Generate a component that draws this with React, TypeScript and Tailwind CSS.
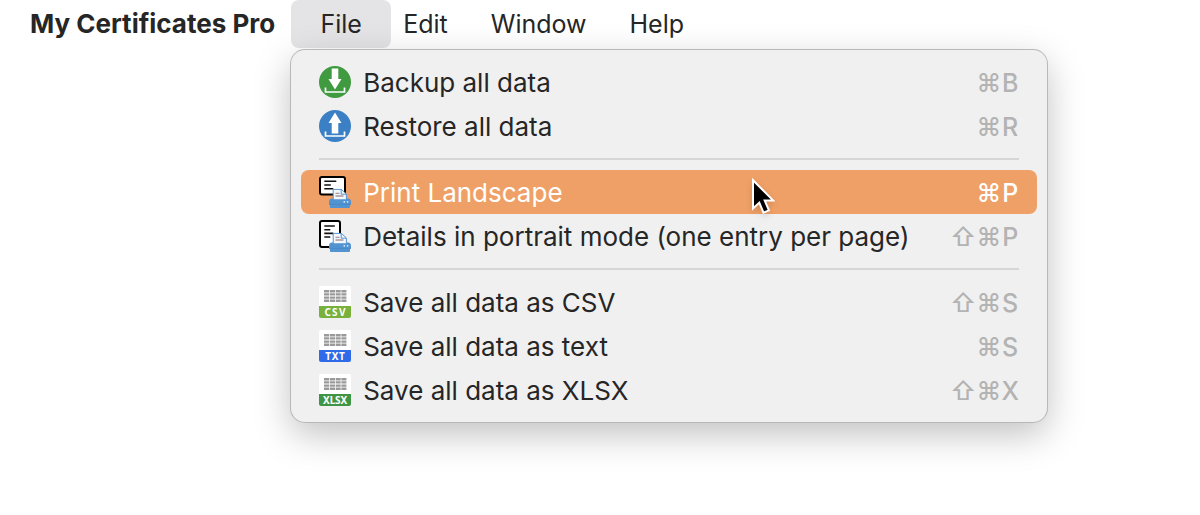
import React, { useState } from "react";

const BackupIcon = () => (
  <svg viewBox="0 0 32 32" className="size-8 shrink-0" aria-hidden="true">
    <circle cx="16" cy="16" r="16" fill="#409a40" />
    <path d="M12.7 2.5h6.6v10.5h3.2L16 23.5 9.5 13h3.2z" fill="#fff" />
    <path d="M6.5 21.5v4.5h19v-4.5" fill="none" stroke="#fff" strokeWidth="1.7" />
  </svg>
);

const RestoreIcon = () => (
  <svg viewBox="0 0 32 32" className="size-8 shrink-0" aria-hidden="true">
    <circle cx="16" cy="16" r="16" fill="#3b7fc4" />
    <path d="M16 2.5l6.5 10.5h-3.2v10.5h-6.6V13H9.5z" fill="#fff" />
    <path d="M6.5 21.5v4.5h19v-4.5" fill="none" stroke="#fff" strokeWidth="1.7" />
  </svg>
);

const Printer = () => (
  <g>
    <path d="M14.2 24V13.4h8.2l5 4.6v6z" fill="#f4f7fc" stroke="#5596d3" strokeWidth="1" />
    <path d="M22.2 13.4v4.8h5" fill="none" stroke="#5596d3" strokeWidth="1" />
    <path d="M16.5 17.3h4M16.5 20h8" stroke="#a9989c" strokeWidth="1.3" />
    <path d="M13 22.6h1.4v.8h13v-.8H29c2 0 3 1.3 3 3.2v2.8l-1 .4v2.2c0 .6-.3.8-.8.8H11.8c-.5 0-.8-.2-.8-.8V29l-1-.4v-2.8c0-1.9 1-3.2 3-3.2z" fill="#5294d2" />
    <path d="M10 28.4h22" stroke="#4583bf" strokeWidth="0.6" />
    <circle cx="25.3" cy="25.8" r="0.9" fill="#d9ecfb" />
    <circle cx="28.6" cy="25.8" r="0.9" fill="#d9ecfb" />
  </g>
);

const LandscapeIcon = () => (
  <svg viewBox="0 0 32 32" className="size-8 shrink-0" aria-hidden="true">
    <rect x="1" y="1" width="25" height="17.4" rx="2" fill="#fff" stroke="#000" strokeWidth="2" />
    <path d="M5.3 5.2h12M5.3 9h6.5M5.3 12.8h9" stroke="#111" strokeWidth="1.6" />
    <Printer />
  </svg>
);

const PortraitIcon = () => (
  <svg viewBox="0 0 32 32" className="size-8 shrink-0" aria-hidden="true">
    <rect x="1" y="1" width="20" height="26" rx="2" fill="#fff" stroke="#000" strokeWidth="2" />
    <path d="M5.3 6h10.5M5.3 9.8h6M5.3 13.4h9M5.3 17h6" stroke="#111" strokeWidth="1.6" />
    <Printer />
  </svg>
);

const FileIcon = ({ label, color, spread }: { label: string; color: string; spread: number[] }) => (
  <svg viewBox="0 0 32 32" className="size-8 shrink-0" aria-hidden="true">
    <rect width="32" height="32" rx="2" fill="#fff" />
    <path d="M0 20h32v10a2 2 0 0 1-2 2H2a2 2 0 0 1-2-2z" fill={color} />
    {[4, 7.2, 10.4, 13.6].map((y) => (
      <path key={y} d={`M5 ${y + 1.2}h5.3M11 ${y + 1.2}h5M16.7 ${y + 1.2}h5M22.4 ${y + 1.2}h5`} stroke="#9a9a9a" strokeWidth="2.4" />
    ))}
    <text
      x={spread.join(" ")}
      y="29.5"
      textAnchor="middle"
      fill="#fff"
      fontFamily="'Noto Sans', sans-serif"
      fontWeight="700"
      fontSize="10"
    >
      {label}
    </text>
  </svg>
);

const Pointer = () => (
  <svg viewBox="0 0 24 38" className="pointer-events-none absolute left-[460px] top-[127px] z-10 h-[38px] w-6 drop-shadow-md" aria-hidden="true">
    <path d="M2 3.2v28.2l6.3-5.8 4.2 10 5.4-2.3-4.2-9.7h8.6z" fill="#000" stroke="#fff" strokeWidth="2" />
  </svg>
);

type Item = { name: string; keys: string; icon: React.ReactNode };

const groups: Item[][] = [
  [
    { name: "Backup all data", keys: "⌘B", icon: <BackupIcon /> },
    { name: "Restore all data", keys: "⌘R", icon: <RestoreIcon /> },
  ],
  [
    { name: "Print Landscape", keys: "⌘P", icon: <LandscapeIcon /> },
    { name: "Details in portrait mode (one entry per page)", keys: "⇧⌘P", icon: <PortraitIcon /> },
  ],
  [
    { name: "Save all data as CSV", keys: "⇧⌘S", icon: <FileIcon label="CSV" color="#78b13c" spread={[8.6, 15.8, 23.2]} /> },
    { name: "Save all data as text", keys: "⌘S", icon: <FileIcon label="TXT" color="#2f6be8" spread={[9.2, 16, 22.8]} /> },
    { name: "Save all data as XLSX", keys: "⇧⌘X", icon: <FileIcon label="XLSX" color="#3f9546" spread={[7.4, 13.6, 18.8, 24.8]} /> },
  ],
];

const App = () => {
  const [open, setOpen] = useState(true);
  const [active, setActive] = useState("Print Landscape");

  return (
    <div className="min-h-screen overflow-hidden bg-white font-['Inter',sans-serif] text-[25px] leading-8 text-[#262626]">
      <nav className="flex h-12 items-center pl-[30px]">
        <span className="whitespace-nowrap text-[26px] font-bold">My Certificates Pro</span>

        <div className="relative ml-4">
          <button
            onClick={() => setOpen(!open)}
            aria-expanded={open}
            className={`h-12 w-[100px] rounded-lg ${open ? "bg-[#e4e4e6]" : ""}`}
          >
            File
          </button>

          {open && (
            <div
              role="menu"
              className="absolute left-0 top-[50px] w-[756px] rounded-[14px] bg-[#f0f0f0] p-[10px] text-[26px] shadow-[0_0_0_1px_#b8b8b8,0_12px_36px_rgba(0,0,0,0.25)]"
            >
              {groups.map((group, i) => (
                <div key={i}>
                  {i > 0 && (
                    <div className="flex h-[22px] items-center px-[18px]">
                      <hr className="w-full border-t-2 border-[#d6d6d6]" />
                    </div>
                  )}
                  {group.map((item) => (
                    <button
                      key={item.name}
                      role="menuitem"
                      onMouseEnter={() => setActive(item.name)}
                      className={`flex h-11 w-full items-center gap-3 rounded-lg px-[18px] text-left ${active === item.name ? "bg-[#efa066] text-white" : ""}`}
                    >
                      {item.icon}
                      <span className="flex-1 whitespace-nowrap pt-px">{item.name}</span>
                      <span className={`flex pt-px font-medium ${active === item.name ? "text-white" : "text-[#b3b3b3]"}`}>
                        {[...item.keys].map((key) => (
                          <kbd key={key} className="min-w-[18px] text-center font-['Inter',sans-serif] text-[25px]">
                            {key}
                          </kbd>
                        ))}
                      </span>
                    </button>
                  ))}
                </div>
              ))}
              <Pointer />
            </div>
          )}
        </div>

        <div className="ml-3 flex gap-[43px]">
          <button>Edit</button>
          <button>Window</button>
          <button>Help</button>
        </div>
      </nav>
    </div>
  );
};

export default App;
